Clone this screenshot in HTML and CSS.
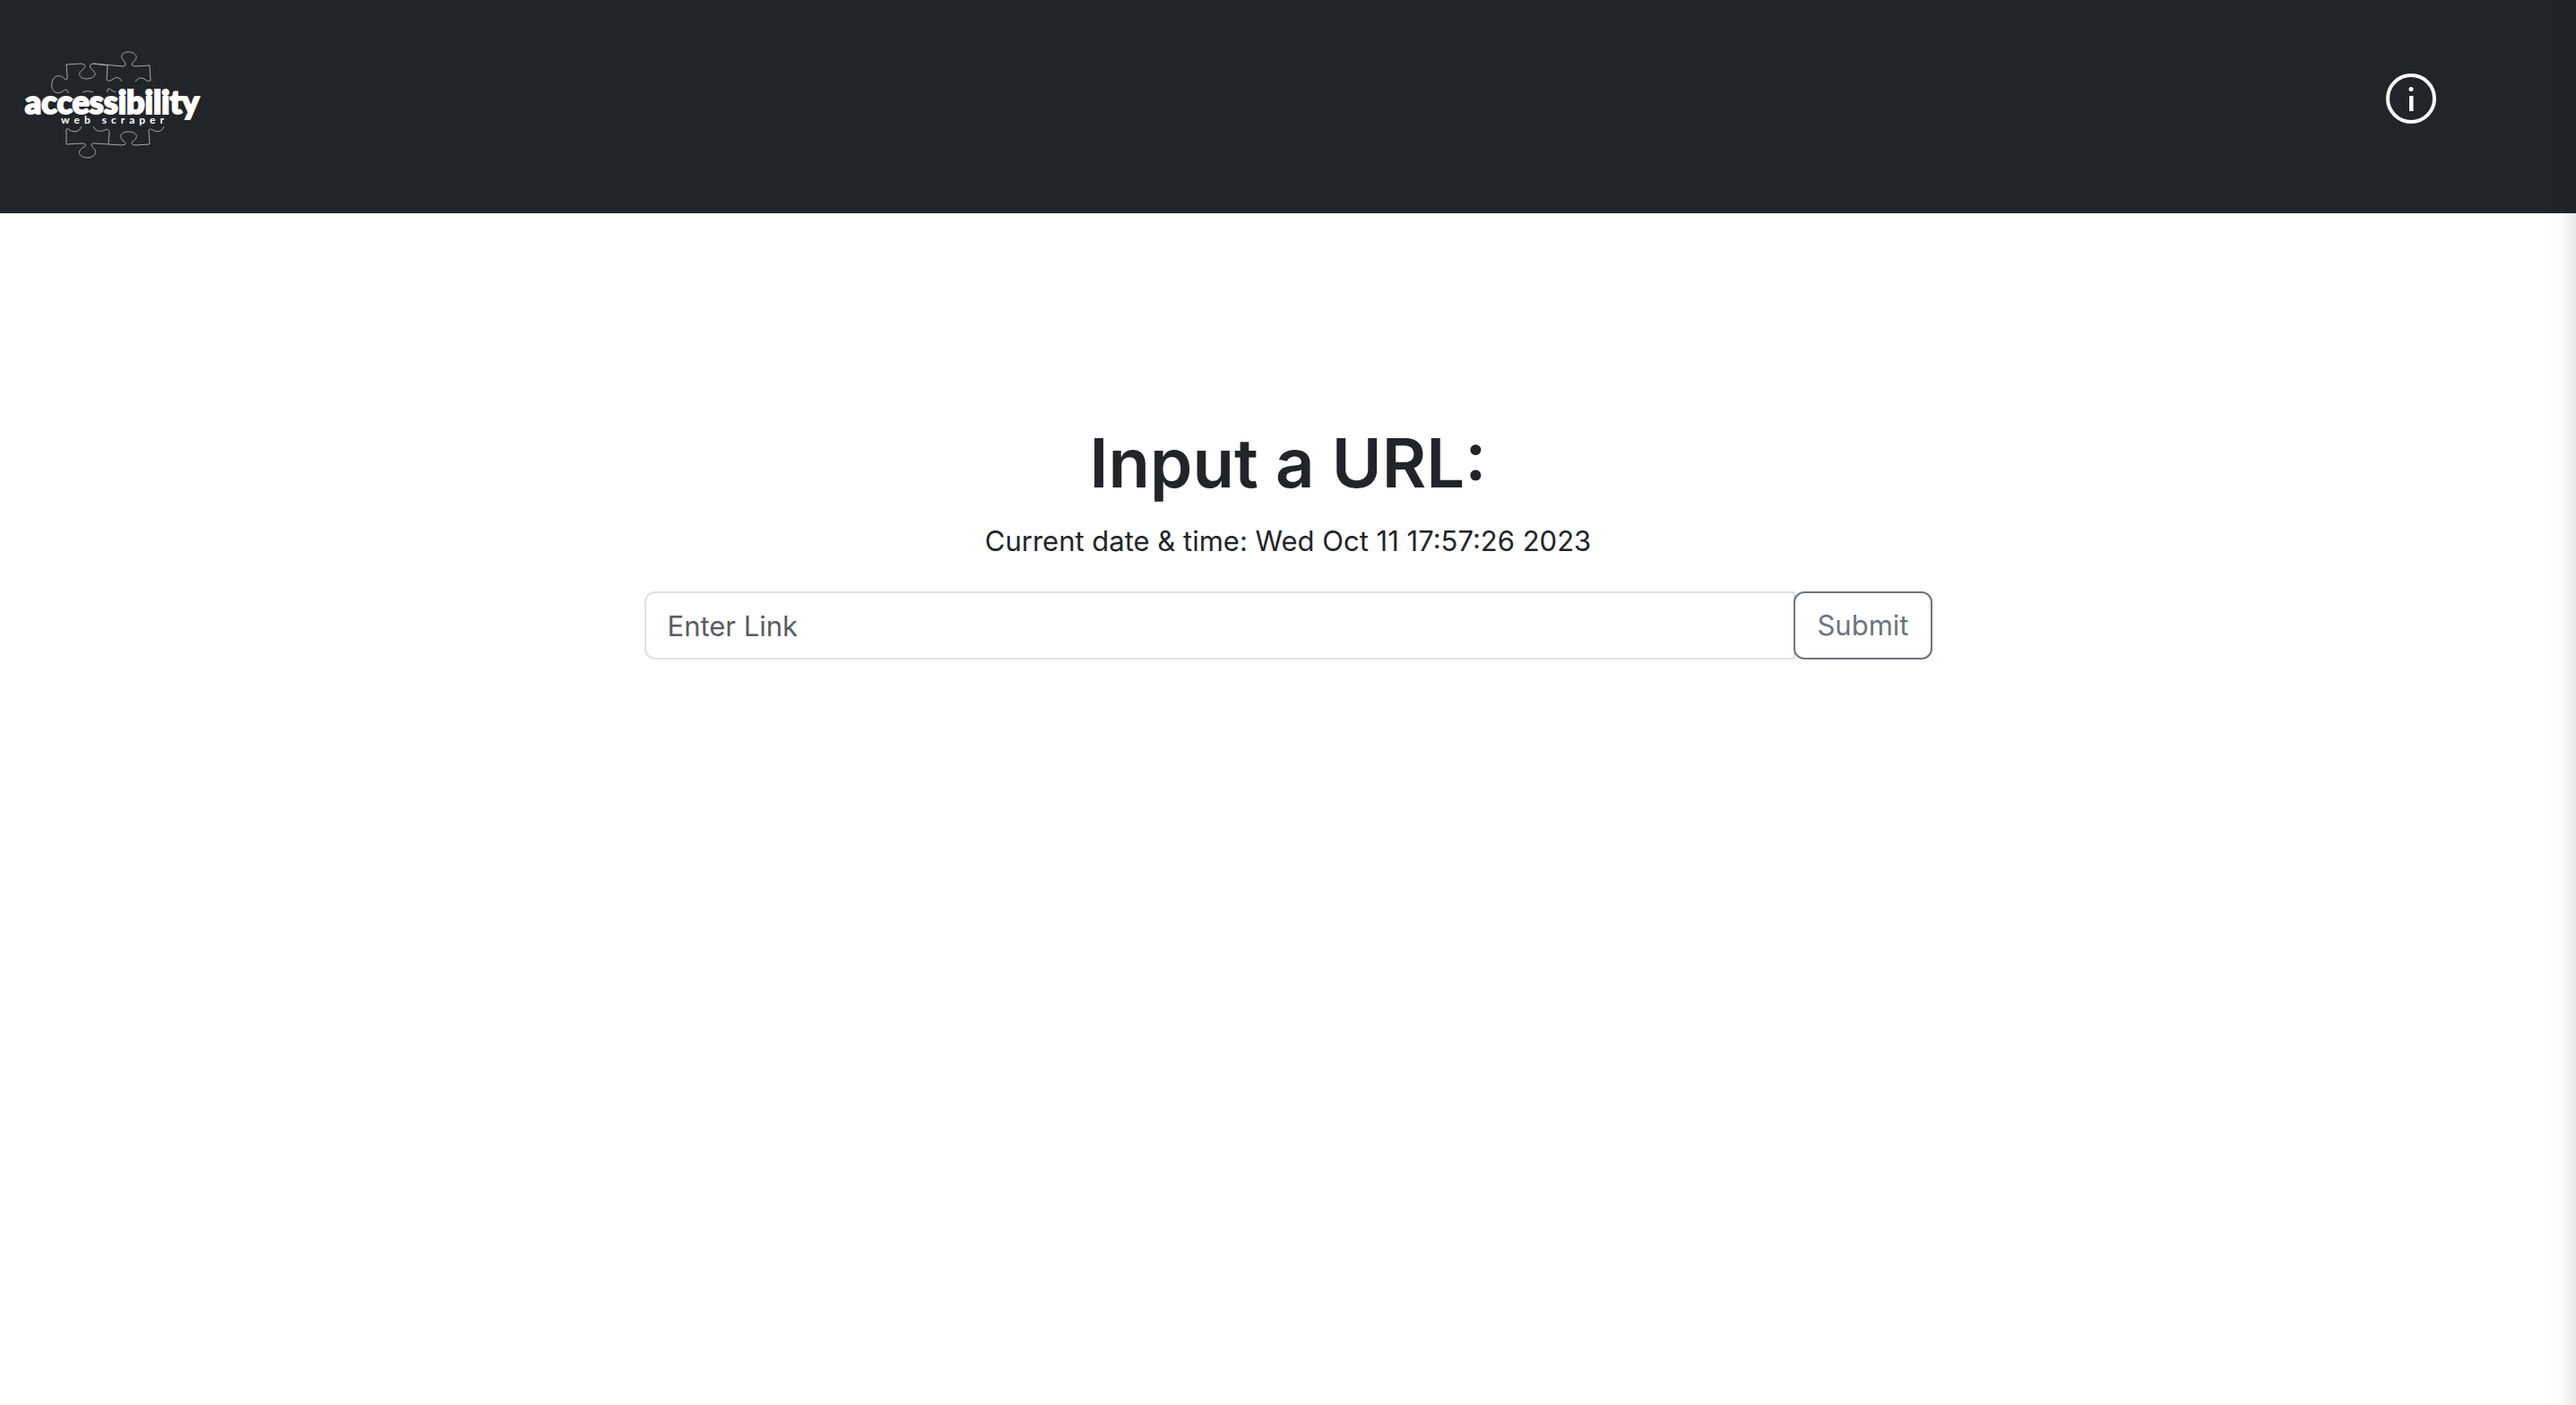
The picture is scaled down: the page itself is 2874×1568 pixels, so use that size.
FILE: index.html
```html
<!DOCTYPE html>
<html lang="en">
<head>
<meta charset="utf-8">
<title>Accessibility Web Scraper</title>
<link rel="stylesheet" href="styles.css">
</head>
<body>
<header class="navbar">
  <a class="brand" href="#" aria-label="Accessibility web scraper home">
    <svg class="logo" viewBox="0 0 204 124" role="img" aria-label="Accessibility web scraper">
      <g class="puzzle">
        <path d="M52 48 Q51 42 47 45 C40 51 32 46 34 36 C36 27 44 27 48 32 Q52 34 51 29 L50 16 L66 15 Q75 16 68 22 C61 27 66 32 73 32 C82 31 85 27 79 22 Q73 16 80 15 L96 17 L95 33 Q97 36 101 33 Q108 27 112 35"/>
        <path d="M80 15 L113 18 Q119 17 114 12 C108 5 115 2 119 2 C126 2 132 7 125 13 Q120 17 127 18 L143 17 L144 34 Q140 36 137 32 Q131 29 127 35"/>
        <path d="M68 47 Q74 44 80 47 M96 47 Q95 40 101 45 L105 47"/>
        <path d="M50 105 L50 89 Q50 86 55 90 Q64 93 67 85 M80 85 Q83 92 91 90 Q98 86 98 92 L97 105 L82 104 Q75 104 80 109 C87 115 79 120 74 120 C65 120 61 114 68 109 Q76 105 67 104 L50 105"/>
        <path d="M97 105 L112 106 Q120 105 113 101 C107 94 114 91 119 91 C127 91 132 96 125 101 Q120 105 127 106 L143 105 L142 90 Q142 86 148 90 Q156 93 159 85"/>
      </g>
      <text class="wordmark" x="101" y="71">accessibility</text>
      <text class="tagline" x="104" y="82">web scraper</text>
    </svg>
  </a>
  <button class="info" type="button" aria-label="Information">
    <svg class="info-icon" viewBox="0 0 56 56" aria-hidden="true">
      <circle cx="28" cy="28" r="26" fill="none" stroke="currentColor" stroke-width="4"/>
      <circle cx="28" cy="17.500" r="2.500" fill="currentColor"/>
      <path d="M26 25h4.500v17H26z" fill="currentColor"/>
    </svg>
  </button>
</header>
<main class="content">
  <h1 class="title">Input a URL:</h1>
  <p class="clock">Current date &amp; time: Wed Oct 11 17:57:26 2023</p>
  <form class="link-form">
    <input class="link-input" type="text" placeholder="Enter Link" aria-label="Enter Link">
    <button class="submit" type="submit">Submit</button>
  </form>
</main>
</body>
</html>
```
FILE: styles.css
```css
* { box-sizing: border-box; }

body {
  margin: 0;
  min-height: 100vh;
  background: #fff;
  color: #212529;
  font-family: Inter, "Liberation Sans", sans-serif;
  font-size: 31px;
  line-height: 48px;
}

/* soft shade along the right edge of the window */
body::after {
  content: "";
  position: fixed;
  inset: 0 0 0 auto;
  width: 32px;
  background: linear-gradient(to right, rgba(0, 0, 0, 0), rgba(0, 0, 0, .02) 50%, rgba(0, 0, 0, .09));
  pointer-events: none;
}

.navbar {
  display: flex;
  align-items: flex-start;
  justify-content: space-between;
  padding: 56px 156px 58px 24px;
  background: #212529;
}

.brand { display: block; }

.logo {
  display: block;
  width: 204px;
  height: 124px;
  overflow: visible;
}

.puzzle {
  fill: none;
  stroke: #a6a8aa;
  stroke-width: 1;
}

.wordmark,
.tagline {
  fill: #fff;
  text-anchor: middle;
  font-family: Lato, sans-serif;
}

.wordmark {
  font-size: 36px;
  font-weight: 900;
  stroke: #fff;
  stroke-width: 2;
}

.tagline {
  font-size: 12px;
  font-weight: 700;
  letter-spacing: 5px;
}

.info {
  margin: 26px 0 0;
  padding: 0;
  border: 0;
  background: none;
  color: #fff;
}

.info-icon {
  display: block;
  width: 56px;
  height: 56px;
}

.content {
  display: flex;
  flex-direction: column;
  align-items: center;
  padding-top: 230px;
}

.title {
  margin: 0 0 16px;
  font-size: 76px;
  font-weight: 600;
  line-height: 96px;
}

.clock { margin: 0 0 32px; }

.link-form {
  display: flex;
  width: 50%;
}

.link-input,
.submit {
  height: 76px;
  padding: 12px 24px;
  font: inherit;
  background: #fff;
}

.link-input {
  flex: 1;
  min-width: 0;
  border: 2px solid #dee2e6;
  border-radius: 12px 0 0 12px;
  color: #212529;
}

.link-input::placeholder {
  color: #595c5f;
  opacity: 1;
}

.submit {
  margin-left: -2px;
  border: 2px solid #6c757d;
  border-radius: 12px;
  color: #6c757d;
}
```
